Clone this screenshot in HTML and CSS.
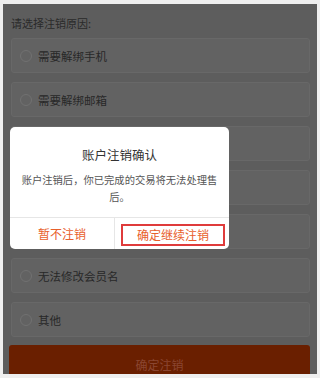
FILE: index.html
```html
<!DOCTYPE html>
<html lang="zh-CN">
<head>
<meta charset="utf-8">
<title>账户注销</title>
<link rel="stylesheet" href="styles.css">
</head>
<body>
<div class="screen">
  <div class="page">
    <div class="heading">请选择注销原因:</div>
    <ul class="reasons">
      <li class="reason"><span class="radio"></span><span>需要解绑手机</span></li>
      <li class="reason"><span class="radio"></span><span>需要解绑邮箱</span></li>
      <li class="reason"><span class="radio"></span></li>
      <li class="reason"><span class="radio"></span></li>
      <li class="reason"><span class="radio"></span></li>
      <li class="reason"><span class="radio"></span><span>无法修改会员名</span></li>
      <li class="reason"><span class="radio"></span><span>其他</span></li>
    </ul>
    <div class="submit">确定注销</div>
  </div>
  <div class="dialog">
    <div class="dialog-title">账户注销确认</div>
    <div class="dialog-body">账户注销后，你已完成的交易将无法处理售后。</div>
    <div class="dialog-footer">
      <div class="dbtn cancel">暂不注销</div>
      <div class="divider"></div>
      <div class="dbtn confirm"><span class="confirm-box">确定继续注销</span></div>
    </div>
  </div>
</div>
</body>
</html>
```

FILE: styles.css
```css
html, body {
  margin: 0;
  padding: 0;
}
body {
  background: #efefef;
  font-family: "Noto Sans CJK SC", "Noto Sans", sans-serif;
  padding: 4px 3px 4px 3px;
}
.screen {
  position: relative;
  height: 370px;
  background: #5d5d5d;
  overflow: hidden;
}
.page {
  padding: 0 7px 0 7px;
}
.heading {
  padding: 11px 0 0 1px;
  height: 16px;
  line-height: 16px;
  font-size: 11px;
  color: #2a2a2a;
  margin-bottom: 7px;
}
.reasons {
  list-style: none;
  margin: 0;
  padding: 0 0 0 1px;
  display: flex;
  flex-direction: column;
  gap: 9px;
}
.reason {
  box-sizing: border-box;
  height: 35px;
  background: #626262;
  border: 1px solid #686868;
  border-radius: 3px;
  display: flex;
  align-items: center;
  padding-left: 8px;
  font-size: 11.5px;
  color: #282828;
}
.radio {
  box-sizing: border-box;
  width: 12px;
  height: 12px;
  border: 1px solid #717171;
  border-radius: 50%;
  margin-right: 6px;
  flex: none;
}
.submit {
  margin-top: 8px;
  height: 40px;
  line-height: 40px;
  background: #6a1f00;
  border-radius: 3px;
  text-align: center;
  font-size: 12px;
  color: #8a4631;
  margin-left: -1px;
  margin-right: 0;
}
.dialog {
  position: absolute;
  left: 7px;
  top: 123px;
  width: 219px;
  height: 122px;
  background: #ffffff;
  border-radius: 5px;
  display: flex;
  flex-direction: column;
}
.dialog-title {
  padding-top: 20px;
  height: 16px;
  line-height: 16px;
  text-align: center;
  font-size: 12.5px;
  color: #333333;
}
.dialog-body {
  margin-top: 8px;
  padding: 0 10px;
  line-height: 17px;
  font-size: 10.3px;
  color: #555555;
  text-align: center;
  height: 34px;
}
.dialog-footer {
  margin-top: 12px;
  border-top: 1px solid #e6e6e6;
  flex: 1;
  display: flex;
}
.dbtn {
  flex: 1;
  display: flex;
  align-items: center;
  justify-content: center;
  font-size: 12px;
  color: #e8602c;
}
.divider {
  width: 1px;
  background: #e6e6e6;
}
.confirm {
  align-items: stretch;
  padding: 6px 4px 3px 6px;
}
.confirm-box {
  flex: 1;
  box-sizing: border-box;
  border: 2px solid #df3b3b;
  display: flex;
  align-items: center;
  justify-content: center;
  line-height: 1;
}
```
